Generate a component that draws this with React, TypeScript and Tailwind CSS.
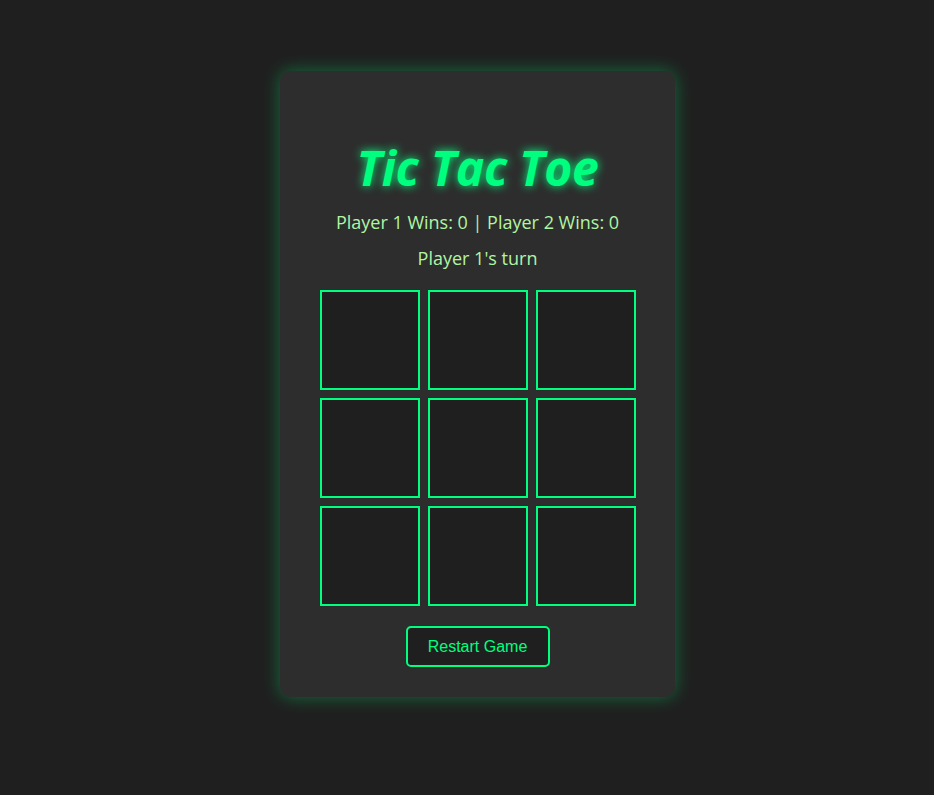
import React, { useState } from "react";

const cells = Array.from({ length: 9 });

export default function App() {
  const [board] = useState<(string | null)[]>(cells.map(() => null));

  return (
    <div className="min-h-[795px] w-full bg-[#1f1f1f] flex justify-center pl-[21px] pt-[71px] font-['Open_Sans',sans-serif]">
      {/* Game card */}
      <div className="w-[395px] h-[626px] bg-[#2d2d2d] rounded-[10px] shadow-[0_0_18px_rgba(0,255,127,0.35)] flex flex-col items-center pt-[69px]">
        <h1 className="text-[48px] leading-[56px] font-bold italic text-[#00ff7f] [text-shadow:0_0_10px_#00ff7f] tracking-[-0.3px]">
          Tic Tac Toe
        </h1>
        <p className="mt-[14px] text-[18px] leading-[24px] text-[#b0f5a4]">
          Player 1 Wins: 0 | Player 2 Wins: 0
        </p>
        <p className="mt-[12px] text-[18px] leading-[24px] text-[#b0f5a4]">
          Player 1's turn
        </p>

        {/* Board */}
        <div className="mt-[20px] grid grid-cols-3 gap-2">
          {board.map((c, i) => (
            <div
              key={i}
              className="w-[100px] h-[100px] border-2 border-[#00ff7f] bg-[#1f1f1f]"
            >
              {c}
            </div>
          ))}
        </div>

        <button className="mt-[20px] w-[144px] h-[41px] rounded-[5px] border-2 border-[#00ff7f] bg-[#1f1f1f] text-[#00ff7f] text-[16px] font-['Liberation_Sans',sans-serif]">
          Restart Game
        </button>
      </div>
    </div>
  );
}
